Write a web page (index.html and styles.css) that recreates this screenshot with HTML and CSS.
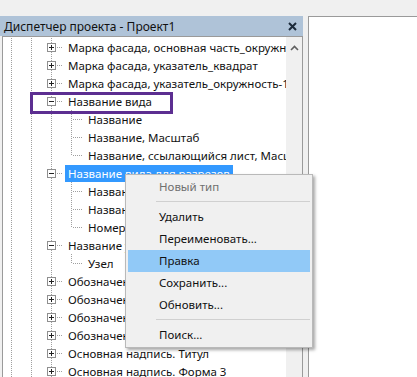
FILE: index.html
```html
<!DOCTYPE html>
<html>
  <head>
    <meta charset="utf-8">
    <title>Диспетчер проекта</title>
    <link rel="stylesheet" href="styles.css">
  </head>
  <body>
    <div class="screen">
      <div class="browser">
        <div class="title">
          <span>Диспетчер проекта - Проект1</span>
          <svg class="close" width="9" height="9" viewBox="0 0 9 9"><path d="M1 1L8 8M8 1L1 8" stroke="#1b2a3a" stroke-width="2"/></svg>
        </div>
        <div class="tree">
          <div class="rows">
            <div class="row"><i class="g v"></i><i class="g v"></i><i class="g x"><svg width="9" height="9" viewBox="0 0 9 9"><rect x="0.5" y="0.5" width="8" height="8" fill="#fff" stroke="#8f8f8f"/><path d="M2 4.5H7M4.5 2V7" stroke="#222"/></svg></i><span class="t">Марка фасада, основная часть_окружность</span></div>
            <div class="row"><i class="g v"></i><i class="g v"></i><i class="g x"><svg width="9" height="9" viewBox="0 0 9 9"><rect x="0.5" y="0.5" width="8" height="8" fill="#fff" stroke="#8f8f8f"/><path d="M2 4.5H7M4.5 2V7" stroke="#222"/></svg></i><span class="t">Марка фасада, указатель_квадрат</span></div>
            <div class="row"><i class="g v"></i><i class="g v"></i><i class="g x"><svg width="9" height="9" viewBox="0 0 9 9"><rect x="0.5" y="0.5" width="8" height="8" fill="#fff" stroke="#8f8f8f"/><path d="M2 4.5H7M4.5 2V7" stroke="#222"/></svg></i><span class="t">Марка фасада, указатель_окружность-1</span></div>
            <div class="row"><i class="g v"></i><i class="g v"></i><i class="g x"><svg width="9" height="9" viewBox="0 0 9 9"><rect x="0.5" y="0.5" width="8" height="8" fill="#fff" stroke="#8f8f8f"/><path d="M2 4.5H7" stroke="#222"/></svg></i><span class="t">Название вида</span></div>
            <div class="row"><i class="g v"></i><i class="g v"></i><i class="g v"></i><i class="g e"></i><span class="t">Название</span></div>
            <div class="row"><i class="g v"></i><i class="g v"></i><i class="g v"></i><i class="g e"></i><span class="t">Название, Масштаб</span></div>
            <div class="row"><i class="g v"></i><i class="g v"></i><i class="g v"></i><i class="g l"></i><span class="t">Название, ссылающийся лист, Масштаб</span></div>
            <div class="row"><i class="g v"></i><i class="g v"></i><i class="g x"><svg width="9" height="9" viewBox="0 0 9 9"><rect x="0.5" y="0.5" width="8" height="8" fill="#fff" stroke="#8f8f8f"/><path d="M2 4.5H7" stroke="#222"/></svg></i><span class="t sel">Название вида для разрезов</span></div>
            <div class="row"><i class="g v"></i><i class="g v"></i><i class="g v"></i><i class="g e"></i><span class="t">Название</span></div>
            <div class="row"><i class="g v"></i><i class="g v"></i><i class="g v"></i><i class="g e"></i><span class="t">Название, Масштаб</span></div>
            <div class="row"><i class="g v"></i><i class="g v"></i><i class="g v"></i><i class="g l"></i><span class="t">Номер вида</span></div>
            <div class="row"><i class="g v"></i><i class="g v"></i><i class="g x"><svg width="9" height="9" viewBox="0 0 9 9"><rect x="0.5" y="0.5" width="8" height="8" fill="#fff" stroke="#8f8f8f"/><path d="M2 4.5H7" stroke="#222"/></svg></i><span class="t">Название узла</span></div>
            <div class="row"><i class="g v"></i><i class="g v"></i><i class="g v"></i><i class="g l"></i><span class="t">Узел</span></div>
            <div class="row"><i class="g v"></i><i class="g v"></i><i class="g x"><svg width="9" height="9" viewBox="0 0 9 9"><rect x="0.5" y="0.5" width="8" height="8" fill="#fff" stroke="#8f8f8f"/><path d="M2 4.5H7M4.5 2V7" stroke="#222"/></svg></i><span class="t">Обозначение осей</span></div>
            <div class="row"><i class="g v"></i><i class="g v"></i><i class="g x"><svg width="9" height="9" viewBox="0 0 9 9"><rect x="0.5" y="0.5" width="8" height="8" fill="#fff" stroke="#8f8f8f"/><path d="M2 4.5H7M4.5 2V7" stroke="#222"/></svg></i><span class="t">Обозначение разреза</span></div>
            <div class="row"><i class="g v"></i><i class="g v"></i><i class="g x"><svg width="9" height="9" viewBox="0 0 9 9"><rect x="0.5" y="0.5" width="8" height="8" fill="#fff" stroke="#8f8f8f"/><path d="M2 4.5H7M4.5 2V7" stroke="#222"/></svg></i><span class="t">Обозначение уровня</span></div>
            <div class="row"><i class="g v"></i><i class="g v"></i><i class="g x"><svg width="9" height="9" viewBox="0 0 9 9"><rect x="0.5" y="0.5" width="8" height="8" fill="#fff" stroke="#8f8f8f"/><path d="M2 4.5H7M4.5 2V7" stroke="#222"/></svg></i><span class="t">Обозначение фасада</span></div>
            <div class="row"><i class="g v"></i><i class="g v"></i><i class="g x"><svg width="9" height="9" viewBox="0 0 9 9"><rect x="0.5" y="0.5" width="8" height="8" fill="#fff" stroke="#8f8f8f"/><path d="M2 4.5H7M4.5 2V7" stroke="#222"/></svg></i><span class="t">Основная надпись. Титул</span></div>
            <div class="row"><i class="g v"></i><i class="g v"></i><i class="g x"><svg width="9" height="9" viewBox="0 0 9 9"><rect x="0.5" y="0.5" width="8" height="8" fill="#fff" stroke="#8f8f8f"/><path d="M2 4.5H7M4.5 2V7" stroke="#222"/></svg></i><span class="t">Основная надпись. Форма 3</span></div>
          </div>
          <div class="scrollbar">
            <svg class="arrow" width="9" height="6" viewBox="0 0 9 6"><path d="M1 5L4.5 1.5L8 5" fill="none" stroke="#606060" stroke-width="1.6"/></svg>
          </div>
        </div>
      </div>
      <div class="view"></div>
    </div>

    <div class="mark"></div>

    <div class="menu">
      <div class="item off">Новый тип</div>
      <div class="sep"></div>
      <div class="item">Удалить</div>
      <div class="item">Переименовать...</div>
      <div class="item hot">Правка</div>
      <div class="item">Сохранить...</div>
      <div class="item">Обновить...</div>
      <div class="sep"></div>
      <div class="item">Поиск...</div>
    </div>
  </body>
</html>
```

FILE: styles.css
```css
html, body {
  margin: 0;
  height: 100%;
  overflow: hidden;
}
body {
  background-color: #f0f0f0;
  font-family: "Noto Sans", "Liberation Sans", sans-serif;
  font-size: 11.5px;
  color: #111;
}
.screen {
  display: flex;
  height: 100%;
  padding-top: 16px;
  box-sizing: border-box;
}
.browser {
  width: 303px;
  display: flex;
  flex-direction: column;
}
.title {
  height: 20px;
  display: flex;
  align-items: center;
  justify-content: space-between;
  padding: 0 6px 0 4px;
  background-color: #afc3d8;
  font-size: 12px;
  color: #111;
}
.tree {
  flex: 1;
  display: flex;
  margin-left: 2px;
  border: 1px solid #9a9a9a;
  border-bottom: 0;
  background-color: #fff;
  min-height: 0;
}
.rows {
  flex: 1;
  padding-top: 1px;
  overflow: hidden;
  white-space: nowrap;
}
.row {
  display: flex;
  height: 18px;
}
.g {
  flex: none;
  width: 20px;
  height: 18px;
}
/* dotted connector lines */
.v {
  background: repeating-linear-gradient(to bottom, #a0a0a0 0 1px, transparent 1px 2px) 8px 0 / 1px 100% no-repeat;
}
.x, .e {
  background:
    repeating-linear-gradient(to right, #a0a0a0 0 1px, transparent 1px 2px) 10px 9px / 10px 1px no-repeat,
    repeating-linear-gradient(to bottom, #a0a0a0 0 1px, transparent 1px 2px) 8px 0 / 1px 100% no-repeat;
}
.l {
  background:
    repeating-linear-gradient(to right, #a0a0a0 0 1px, transparent 1px 2px) 10px 9px / 10px 1px no-repeat,
    repeating-linear-gradient(to bottom, #a0a0a0 0 1px, transparent 1px 2px) 8px 0 / 1px 10px no-repeat;
}
.x svg {
  display: block;
  margin: 5px 0 0 4px;
}
.t {
  margin: 1px 0 0 2px;
  padding: 0 3px;
  height: 17px;
  line-height: 17px;
}
.sel {
  background-color: #3399ff;
  color: #fff;
}
.scrollbar {
  width: 16px;
  flex: none;
  background-color: #f0f0f0;
}
.arrow {
  display: block;
  margin: 8px auto 0;
}
.view {
  flex: 1;
  margin-left: 5px;
  border-left: 1px solid #9a9a9a;
  border-top: 1px solid #9a9a9a;
  background-color: #fff;
}
/* annotation frame drawn over the tree */
.mark {
  position: absolute;
  left: 30px;
  top: 92px;
  width: 137px;
  height: 16px;
  border: 3px solid #5c2e91;
}
.menu {
  position: absolute;
  left: 125px;
  top: 174px;
  width: 182px;
  padding: 1px 2px;
  background-color: #f0f0f0;
  border: 1px solid #b9b9b9;
  box-shadow: 2px 2px 3px rgba(0, 0, 0, 0.35);
}
.item {
  height: 22px;
  line-height: 22px;
  padding-left: 31px;
  color: #111;
}
.off {
  color: #6f6f6f;
}
.hot {
  background-color: #91c9f7;
}
.sep {
  height: 1px;
  margin: 3px 0 4px 28px;
  background-color: #d0d0d0;
}
```
